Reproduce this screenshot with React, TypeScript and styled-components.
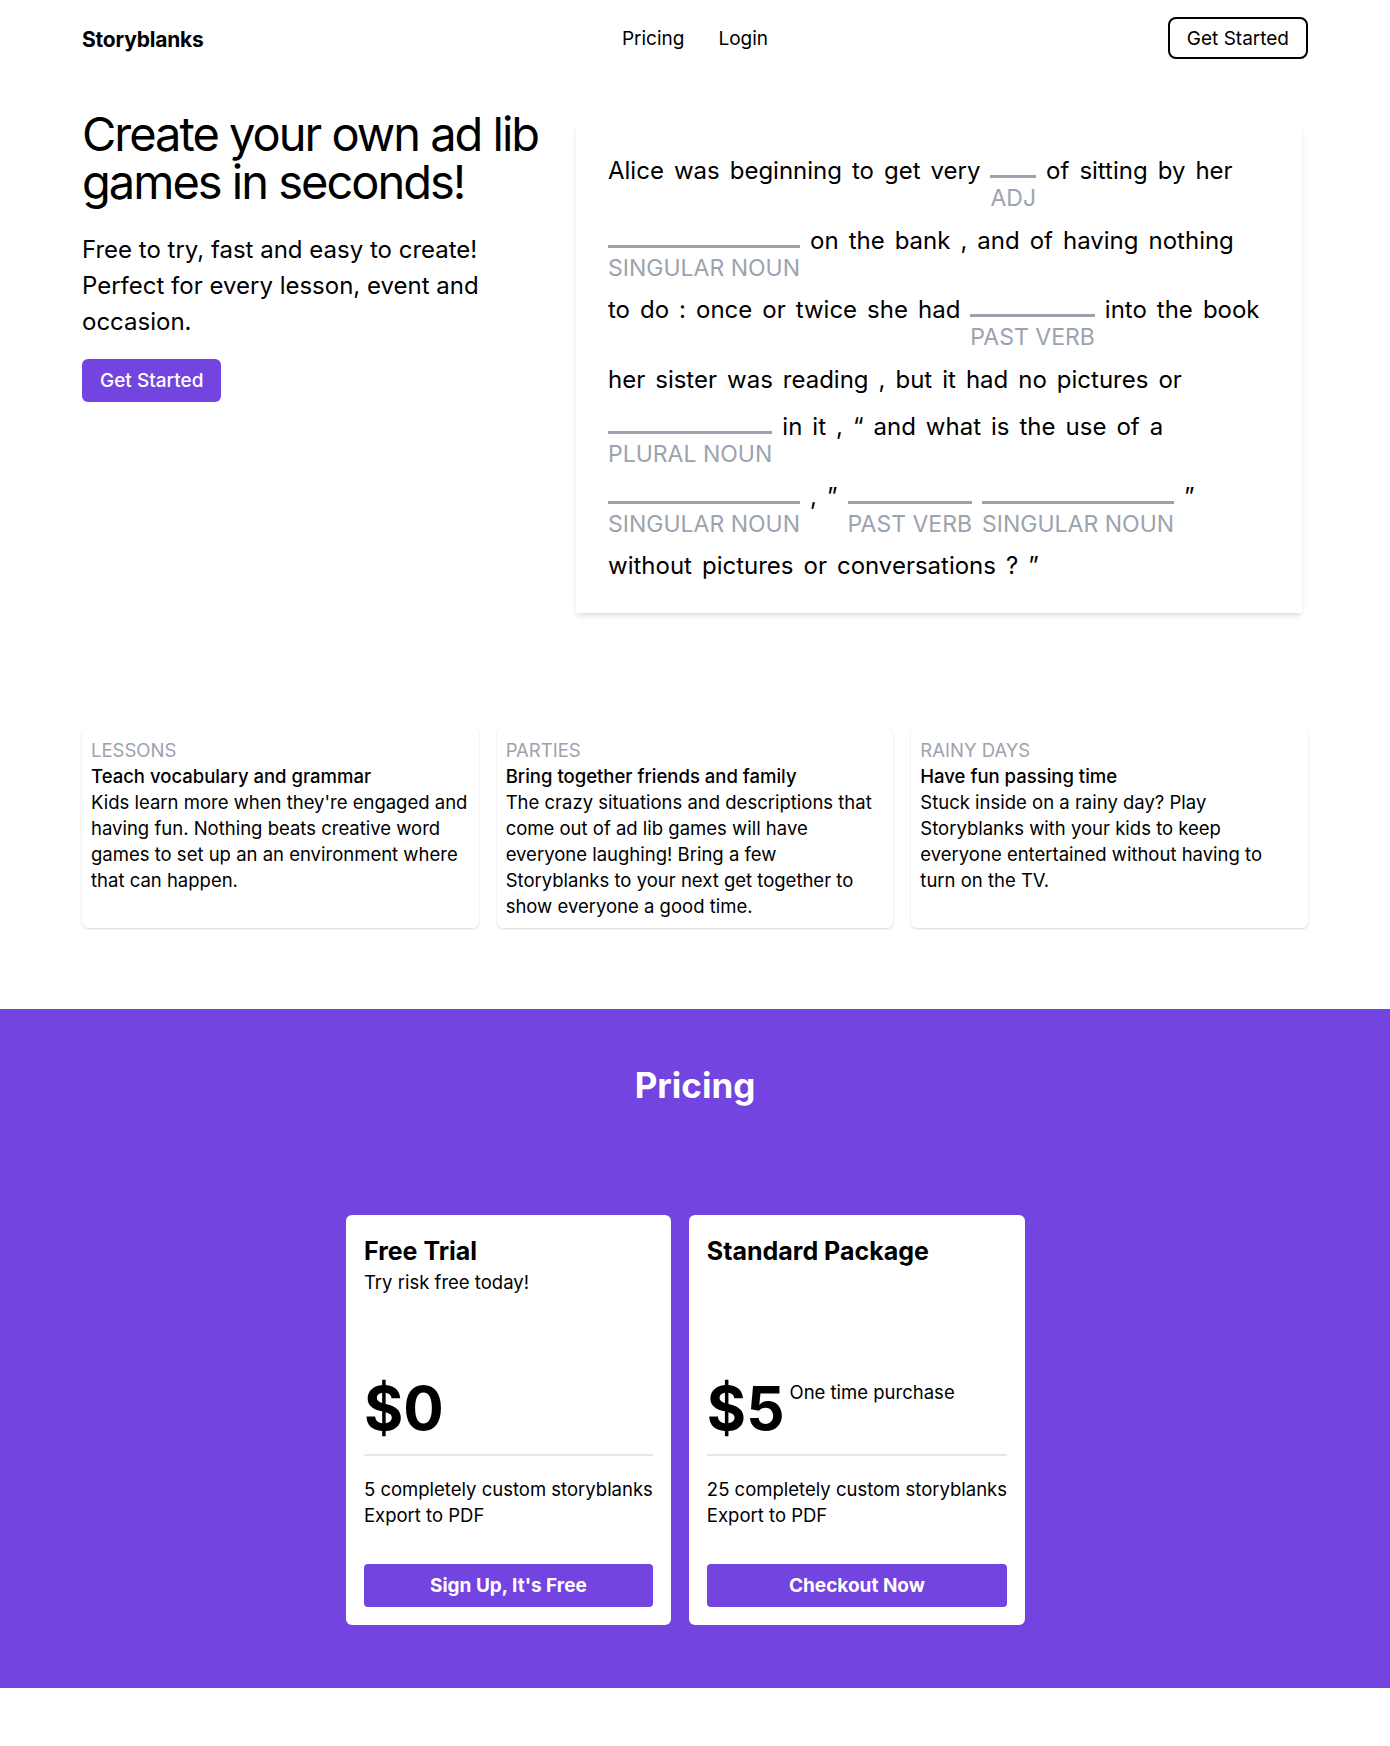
import React from "react";
import styled, { createGlobalStyle } from "styled-components";

const PURPLE = "#7444e0";
const GRAY = "#9ca3af";

type Token = string | { blank: string };
type StoryLine = Token[];

// the story is kept line by line, as it is laid out in the card
const story: StoryLine[] = [
	["Alice", "was", "beginning", "to", "get", "very", { blank: "ADJ" }, "of", "sitting", "by", "her"],
	[{ blank: "SINGULAR NOUN" }, "on", "the", "bank", ",", "and", "of", "having", "nothing"],
	["to", "do", ":", "once", "or", "twice", "she", "had", { blank: "PAST VERB" }, "into", "the", "book"],
	["her", "sister", "was", "reading", ",", "but", "it", "had", "no", "pictures", "or"],
	[{ blank: "PLURAL NOUN" }, "in", "it", ",", "\u201c", "and", "what", "is", "the", "use", "of", "a"],
	[{ blank: "SINGULAR NOUN" }, ",", "\u201d", { blank: "PAST VERB" }, { blank: "SINGULAR NOUN" }, "\u201d"],
	["without", "pictures", "or", "conversations", "?", "\u201d"],
];

type Feature = { tag: string; title: string; body: string[] };

const features: Feature[] = [
	{
		tag: "Lessons",
		title: "Teach vocabulary and grammar",
		body: [
			"Kids learn more when they're engaged and",
			"having fun. Nothing beats creative word",
			"games to set up an an environment where",
			"that can happen.",
		],
	},
	{
		tag: "Parties",
		title: "Bring together friends and family",
		body: [
			"The crazy situations and descriptions that",
			"come out of ad lib games will have",
			"everyone laughing! Bring a few",
			"Storyblanks to your next get together to",
			"show everyone a good time.",
		],
	},
	{
		tag: "Rainy Days",
		title: "Have fun passing time",
		body: [
			"Stuck inside on a rainy day? Play",
			"Storyblanks with your kids to keep",
			"everyone entertained without having to",
			"turn on the TV.",
		],
	},
];

type Plan = { name: string; tagline?: string; price: string; note?: string; items: string[]; cta: string };

const plans: Plan[] = [
	{
		name: "Free Trial",
		tagline: "Try risk free today!",
		price: "$0",
		items: ["5 completely custom storyblanks", "Export to PDF"],
		cta: "Sign Up, It's Free",
	},
	{
		name: "Standard Package",
		price: "$5",
		note: "One time purchase",
		items: ["25 completely custom storyblanks", "Export to PDF"],
		cta: "Checkout Now",
	},
];

const App = (): JSX.Element => {
	return (
		<>
			<GlobalStyle />
			<Container>
				<Nav>
					<Brand>Storyblanks</Brand>
					<NavLinks>
						<NavLink>Pricing</NavLink>
						<NavLink>Login</NavLink>
					</NavLinks>
					<OutlineButton>Get Started</OutlineButton>
				</Nav>

				<Hero>
					<HeroText>
						<Headline>
							<span>Create your own ad lib</span>
							<span>games in seconds!</span>
						</Headline>
						<Lead>
							<span>Free to try, fast and easy to create!</span>
							<span>Perfect for every lesson, event and</span>
							<span>occasion.</span>
						</Lead>
						<PrimaryButton>Get Started</PrimaryButton>
					</HeroText>

					<StoryCard>
						{story.map((line, i) => (
							<Line key={i}>
								{line.map((tok, j) =>
									typeof tok === "string" ? (
										<Word key={j}>{tok}</Word>
									) : (
										<Blank key={j}>
											<BlankLine />
											<BlankLabel>{tok.blank}</BlankLabel>
										</Blank>
									)
								)}
							</Line>
						))}
					</StoryCard>
				</Hero>

				<Features>
					{features.map((f) => (
						<FeatureCard key={f.tag}>
							<FeatureTag>{f.tag}</FeatureTag>
							<FeatureTitle>{f.title}</FeatureTitle>
							{f.body.map((l) => (
								<FeatureLine key={l}>{l}</FeatureLine>
							))}
						</FeatureCard>
					))}
				</Features>
			</Container>

			<PricingSection>
				<PricingTitle>Pricing</PricingTitle>
				<Plans>
					{plans.map((p) => (
						<PlanCard key={p.name}>
							<PlanHead>
								<PlanName>{p.name}</PlanName>
								{p.tagline && <PlanTagline>{p.tagline}</PlanTagline>}
							</PlanHead>
							<PriceRow>
								<Price>{p.price}</Price>
								{p.note && <PriceNote>{p.note}</PriceNote>}
							</PriceRow>
							<Divider />
							<PlanItems>
								{p.items.map((it) => (
									<li key={it}>{it}</li>
								))}
							</PlanItems>
							<PlanButton>{p.cta}</PlanButton>
						</PlanCard>
					))}
				</Plans>
			</PricingSection>
			<Footer />
		</>
	);
};

export default App;

const GlobalStyle = createGlobalStyle`
	* { box-sizing: border-box; }
	body {
		margin: 0;
		background: #fff;
		color: #000;
		font-family: Inter, "Noto Sans", sans-serif;
		-webkit-font-smoothing: antialiased;
	}
`;

const Container = styled.div`
	width: 1226px;
	margin: 0 auto;
`;

const Nav = styled.nav`
	display: grid;
	grid-template-columns: 1fr auto 1fr;
	align-items: center;
	padding-top: 17px;
`;

const Brand = styled.div`
	padding-top: 3px;
	font-size: 21px;
	font-weight: 700;
	letter-spacing: -0.2px;
`;

const NavLinks = styled.div`
	display: flex;
	gap: 34px;
`;

const NavLink = styled.a`
	font-size: 19px;
	color: #000;
	cursor: pointer;
`;

const OutlineButton = styled.button`
	justify-self: end;
	height: 42px;
	padding: 0 17px;
	border: 2px solid #000;
	border-radius: 8px;
	background: #fff;
	font-family: inherit;
	font-size: 19px;
	color: #000;
	cursor: pointer;
`;

const Hero = styled.section`
	display: grid;
	grid-template-columns: 484px 726px;
	gap: 10px;
	align-items: start;
	margin-top: 51px;
`;

const HeroText = styled.div`
	display: flex;
	flex-direction: column;
	align-items: flex-start;
`;

const Headline = styled.h1`
	margin: 0;
	display: flex;
	flex-direction: column;
	font-size: 47px;
	line-height: 48px;
	font-weight: 400;
	letter-spacing: -2px;
	white-space: nowrap;
`;

const Lead = styled.p`
	margin: 26px 0 0;
	display: flex;
	flex-direction: column;
	font-size: 24px;
	line-height: 36px;
	white-space: nowrap;
`;

const PrimaryButton = styled.button`
	margin-top: 19px;
	height: 43px;
	padding: 0 18px;
	border: none;
	border-radius: 6px;
	background: ${PURPLE};
	color: #fff;
	font-family: inherit;
	font-size: 19px;
	font-weight: 500;
	cursor: pointer;
`;

const StoryCard = styled.div`
	margin-top: 14px;
	padding: 32px;
	display: flex;
	flex-direction: column;
	gap: 17.5px;
	background: #fff;
	box-shadow: 0 4px 6px -1px rgba(0, 0, 0, 0.1), 0 2px 4px -1px rgba(0, 0, 0, 0.06);
`;

const Line = styled.div`
	display: flex;
	align-items: flex-start;
	gap: 10px;
`;

const Word = styled.span`
	font-size: 24px;
	line-height: 30px;
`;

const Blank = styled.span`
	display: inline-flex;
	flex-direction: column;
`;

const BlankLine = styled.span`
	height: 22px;
	border-bottom: 3px solid ${GRAY};
`;

const BlankLabel = styled.span`
	margin-top: 10px;
	font-size: 23px;
	line-height: 20px;
	color: ${GRAY};
	white-space: nowrap;
`;

const Features = styled.section`
	display: grid;
	grid-template-columns: repeat(3, 1fr);
	gap: 18px;
	margin-top: 115px;
`;

const FeatureCard = styled.div`
	padding: 9px;
	border-radius: 6px;
	background: #fff;
	box-shadow: 0 1px 3px rgba(0, 0, 0, 0.1), 0 1px 2px rgba(0, 0, 0, 0.06);
	font-size: 18.5px;
	line-height: 26px;
	white-space: nowrap;
`;

const FeatureTag = styled.div`
	color: ${GRAY};
	text-transform: uppercase;
`;

const FeatureTitle = styled.div`
	font-weight: 500;
`;

const FeatureLine = styled.div``;

const PricingSection = styled.section`
	margin-top: 81px;
	padding: 56px 0 63px;
	background: ${PURPLE};
`;

const PricingTitle = styled.h2`
	margin: 0;
	text-align: center;
	color: #fff;
	font-size: 35px;
	line-height: 40px;
	font-weight: 700;
`;

const Plans = styled.div`
	display: flex;
	justify-content: center;
	align-items: stretch;
	gap: 18px;
	margin-top: 110px;
	padding-right: 19px;
`;

const PlanCard = styled.div`
	display: flex;
	flex-direction: column;
	padding: 18px;
	border-radius: 6px;
	background: #fff;
`;

const PlanHead = styled.div`
	min-height: 145px;
`;

const PlanName = styled.h3`
	margin: 0;
	font-size: 25px;
	line-height: 36px;
	font-weight: 700;
`;

const PlanTagline = styled.div`
	font-size: 18.5px;
	line-height: 26px;
`;

const PriceRow = styled.div`
	display: flex;
	align-items: flex-start;
	gap: 5px;
`;

const Price = styled.div`
	font-size: 60px;
	line-height: 60px;
	font-weight: 700;
`;

const PriceNote = styled.div`
	margin-top: 2px;
	font-size: 18.5px;
	line-height: 24px;
`;

const Divider = styled.hr`
	margin: 16px 0 20px;
	border: none;
	height: 2px;
	background: #e5e7eb;
`;

const PlanItems = styled.ul`
	margin: 0;
	padding: 0;
	list-style: none;
	font-size: 18.5px;
	line-height: 26px;
	white-space: nowrap;
`;

const PlanButton = styled.button`
	margin-top: 36px;
	height: 43px;
	border: none;
	border-radius: 4px;
	background: ${PURPLE};
	color: #fff;
	font-family: inherit;
	font-size: 19px;
	font-weight: 700;
	cursor: pointer;
`;

const Footer = styled.div`
	height: 58px;
`;
